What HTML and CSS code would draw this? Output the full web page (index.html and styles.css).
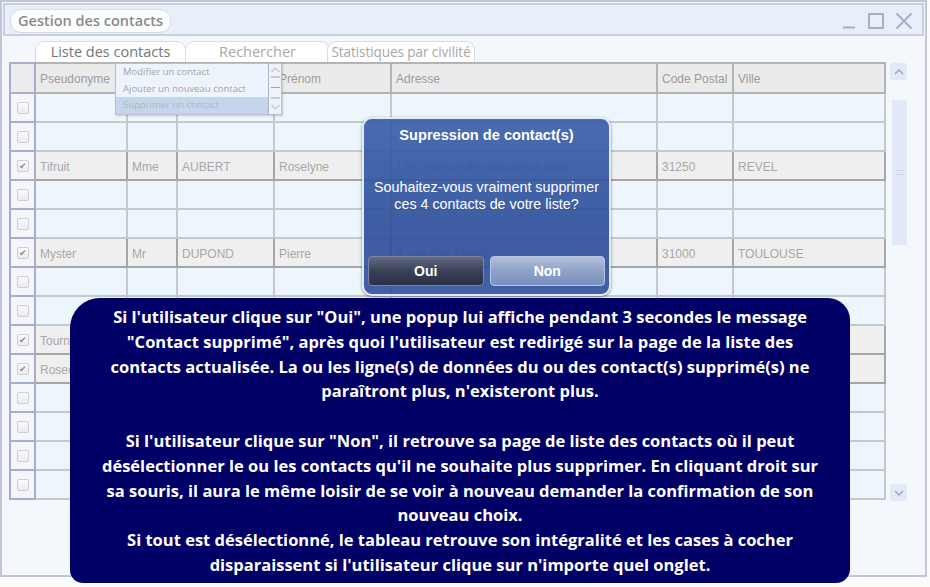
FILE: index.html
```html
<!DOCTYPE html>
<html lang="fr">
<head>
<meta charset="utf-8">
<title>Gestion des contacts</title>
<link rel="stylesheet" href="styles.css">
</head>
<body>
<div class="window">
  <div class="titlebar">
    <span class="title-pill">Gestion des contacts</span>
    <div class="controls">
      <svg class="ctl" width="16" height="18" viewBox="0 0 16 18"><path d="M2 15.5H14" stroke="#a9adc6" stroke-width="2"/></svg>
      <svg class="ctl" width="18" height="18" viewBox="0 0 18 18"><rect x="2" y="2" width="14" height="14" fill="none" stroke="#a9adc6" stroke-width="2"/></svg>
      <svg class="ctl" width="18" height="18" viewBox="0 0 18 18"><path d="M1.5 1.5L16.5 16.5M16.5 1.5L1.5 16.5" stroke="#a9adc6" stroke-width="2"/></svg>
    </div>
  </div>
  <div class="content">
    <div class="tabs">
      <div class="tab tab-active">Liste des contacts</div>
      <div class="tab tab-2">Rechercher</div>
      <div class="tab tab-3">Statistiques par civilité</div>
    </div>
    <div class="grid-area">
      <table class="grid">
        <colgroup>
          <col class="c-chk"><col class="c-pseudo"><col class="c-civ"><col class="c-nom"><col class="c-prenom"><col class="c-adr"><col class="c-cp"><col class="c-ville">
        </colgroup>
        <thead>
          <tr class="head">
            <th class="chk"></th><th>Pseudonyme</th><th></th><th></th><th>Prénom</th><th>Adresse</th><th>Code Postal</th><th>Ville</th>
          </tr>
        </thead>
        <tbody>
          <tr><td class="chk"><span class="box"></span></td><td></td><td></td><td></td><td></td><td></td><td></td><td></td></tr>
          <tr><td class="chk"><span class="box"></span></td><td></td><td></td><td></td><td></td><td></td><td></td><td></td></tr>
          <tr class="sel"><td class="chk"><span class="box checked">✔</span></td><td>Tifruit</td><td>Mme</td><td>AUBERT</td><td>Roselyne</td><td>175, Avenue des Moulins à Vent</td><td>31250</td><td>REVEL</td></tr>
          <tr><td class="chk"><span class="box"></span></td><td></td><td></td><td></td><td></td><td></td><td></td><td></td></tr>
          <tr><td class="chk"><span class="box"></span></td><td></td><td></td><td></td><td></td><td></td><td></td><td></td></tr>
          <tr class="sel"><td class="chk"><span class="box checked">✔</span></td><td>Myster</td><td>Mr</td><td>DUPOND</td><td>Pierre</td><td>2, rue des Tilleuls</td><td>31000</td><td>TOULOUSE</td></tr>
          <tr><td class="chk"><span class="box"></span></td><td></td><td></td><td></td><td></td><td></td><td></td><td></td></tr>
          <tr><td class="chk"><span class="box"></span></td><td></td><td></td><td></td><td></td><td></td><td></td><td></td></tr>
          <tr class="sel"><td class="chk"><span class="box checked">✔</span></td><td class="clip">Tourn</td><td></td><td></td><td></td><td></td><td></td><td></td></tr>
          <tr class="sel"><td class="chk"><span class="box checked">✔</span></td><td class="clip">Rosec</td><td></td><td></td><td></td><td></td><td></td><td></td></tr>
          <tr><td class="chk"><span class="box"></span></td><td></td><td></td><td></td><td></td><td></td><td></td><td></td></tr>
          <tr><td class="chk"><span class="box"></span></td><td></td><td></td><td></td><td></td><td></td><td></td><td></td></tr>
          <tr><td class="chk"><span class="box"></span></td><td></td><td></td><td></td><td></td><td></td><td></td><td></td></tr>
          <tr><td class="chk"><span class="box"></span></td><td></td><td></td><td></td><td></td><td></td><td></td><td></td></tr>
        </tbody>
      </table>
      <div class="vscroll">
        <div class="sbtn"><svg width="10" height="6" viewBox="0 0 10 6"><path d="M1 5L5 1L9 5" fill="none" stroke="#9aa2b8" stroke-width="1.3"/></svg></div>
        <div class="track">
          <div class="thumb"><span class="grip"></span></div>
        </div>
        <div class="sbtn"><svg width="10" height="6" viewBox="0 0 10 6"><path d="M1 1L5 5L9 1" fill="none" stroke="#9aa2b8" stroke-width="1.3"/></svg></div>
      </div>
    </div>
  </div>

  <div class="ctx-menu">
    <ul class="ctx-items">
      <li>Modifier un contact</li>
      <li>Ajouter un nouveau contact</li>
      <li class="ctx-hl">Supprimer un contact</li>
    </ul>
    <div class="ctx-scroll">
      <svg width="11" height="48" viewBox="0 0 11 48">
        <path d="M1.5 7L5.5 3L9.5 7" fill="none" stroke="#9ca4ba" stroke-width="1"/>
        <path d="M1 12H10M1 22.5H10M1 33H10" stroke="#9ca4ba" stroke-width="1"/>
        <path d="M1.5 40L5.5 44L9.5 40" fill="none" stroke="#9ca4ba" stroke-width="1"/>
      </svg>
    </div>
  </div>

  <div class="dialog">
    <div class="dlg-title">Supression de contact(s)</div>
    <div class="dlg-msg">Souhaitez-vous vraiment supprimer<br>ces 4 contacts de votre liste?</div>
    <div class="dlg-buttons">
      <button class="btn btn-yes">Oui</button>
      <button class="btn btn-no">Non</button>
    </div>
  </div>

  <div class="note">
    <p>Si l'utilisateur clique sur "Oui", une popup lui affiche pendant 3 secondes le message<br>"Contact supprimé", après quoi l'utilisateur est redirigé sur la page de la liste des<br>contacts actualisée. La ou les ligne(s) de données du ou des contact(s) supprimé(s) ne<br>paraîtront plus, n'existeront plus.</p>
    <p class="gap">Si l'utilisateur clique sur "Non", il retrouve sa page de liste des contacts où il peut<br>désélectionner le ou les contacts qu'il ne souhaite plus supprimer. En cliquant droit sur<br>sa souris, il aura le même loisir de se voir à nouveau demander la confirmation de son<br>nouveau choix.<br>Si tout est désélectionné, le tableau retrouve son intégralité et les cases à cocher<br>disparaissent si l'utilisateur clique sur n'importe quel onglet.</p>
  </div>
</div>
</body>
</html>
```

FILE: styles.css
```css
* { box-sizing: border-box; }

html, body {
  margin: 0;
  padding: 0;
  background: #fbfbfc;
  width: 930px;
  height: 587px;
  overflow: hidden;
}

.window {
  position: relative;
  width: 927px;
  height: 577px;
  border: 2px solid #c2c5da;
  background: #f4f8fd;
  font-family: "Liberation Sans", Arial, sans-serif;
}

/* Title bar */
.titlebar {
  height: 33px;
  margin: 1px 1px 0 1px;
  border: 2px solid #c9cde2;
  background: #e7eff9;
  display: flex;
  align-items: flex-start;
  justify-content: space-between;
  padding: 4px 9px 0 5px;
}

.title-pill {
  height: 24px;
  padding: 0 7px;
  background: #fdfeff;
  border: 1px solid #d6dbe6;
  border-radius: 11px;
  font-family: "Open Sans", sans-serif;
  font-weight: 600;
  font-size: 14.5px;
  line-height: 22px;
  color: #8a8a8a;
}

.controls {
  display: flex;
  align-items: flex-start;
  gap: 10px;
  padding-top: 3px;
}

.ctl { display: block; }

/* Content */
.content {
  padding: 5px 0 0 7px;
}

.tabs {
  display: flex;
  height: 21px;
  margin-left: 26px;
}

.tab {
  height: 21px;
  background: #ffffff;
  border: 1px solid #d8dbe3;
  border-bottom: none;
  border-radius: 9px 9px 0 0;
  font-family: "Open Sans", sans-serif;
  font-size: 14.5px;
  line-height: 19px;
  color: #a8a8a8;
  text-align: center;
  overflow: hidden;
  white-space: nowrap;
}

.tab-active {
  width: 151px;
  color: #767676;
  z-index: 1;
}

.tab-2 {
  width: 145px;
  margin-left: -1px;
}

.tab-3 {
  width: 148px;
  margin-left: -3px;
  font-size: 13.6px;
  letter-spacing: -0.1px;
}

.grid-area {
  display: flex;
  gap: 4px;
  align-items: flex-start;
}

/* Table */
.grid {
  border-collapse: collapse;
  table-layout: fixed;
  width: 875px;
  font-size: 12px;
  color: #a8a8a8;
  border: 2px solid #b2b2b2;
}

.c-chk { width: 25px; }
.c-pseudo { width: 92px; }
.c-civ { width: 50px; }
.c-nom { width: 97px; }
.c-prenom { width: 117px; }
.c-adr { width: 266px; }
.c-cp { width: 76px; }
.c-ville { width: 152px; }

.grid th,
.grid td {
  border: 2px solid #c6c9cc;
  padding: 2px 0 0 4px;
  text-align: left;
  font-weight: normal;
  white-space: nowrap;
  overflow: hidden;
}

.grid .head {
  height: 30px;
  background: #ebebeb;
}

.grid .head th {
  border-color: #b4b4b4;
  color: #9c9c9c;
}

.grid tbody tr {
  height: 29px;
  background: #eef6fd;
}

.grid tbody tr.sel {
  background: #efefef;
}

.grid tbody tr.sel td {
  border-color: #a6a6a6;
}

.grid .chk,
.grid tbody tr.sel td.chk,
.grid .head th.chk {
  border: 2px solid #a9accf;
  background: #f3f6fb;
  padding: 0;
  text-align: center;
}

.grid .head th.chk {
  background: #ececec;
}

.box {
  display: inline-block;
  width: 12px;
  height: 12px;
  border: 1px solid #cfcfcf;
  border-radius: 2px;
  background: linear-gradient(#fafafa, #ececec);
  vertical-align: middle;
  font-size: 9px;
  line-height: 10px;
  color: #8f8f8f;
  text-align: center;
}

/* Scrollbar */
.vscroll {
  width: 17px;
  height: 438px;
  display: flex;
  flex-direction: column;
  margin-top: 1px;
}

.sbtn {
  height: 17px;
  background: #e3eaf7;
  border-radius: 2px;
  display: flex;
  align-items: center;
  justify-content: center;
}

.track {
  flex: 1;
  padding-top: 20px;
}

.thumb {
  height: 145px;
  margin-left: 2px;
  background: #e2eafa;
  display: flex;
  align-items: center;
  justify-content: center;
}

.grip {
  width: 8px;
  height: 5px;
  border-top: 1px solid #cdd6e8;
  border-bottom: 1px solid #cdd6e8;
}

/* Context menu (overlay) */
.ctx-menu {
  position: absolute;
  left: 113px;
  top: 61px;
  width: 167px;
  height: 52px;
  background: #eef4fb;
  border: 1px solid #b9bfcf;
  box-shadow: 1px 1px 2px rgba(0,0,0,0.18);
  display: flex;
}

.ctx-items {
  list-style: none;
  margin: 0;
  padding: 0;
  flex: 1;
  font-family: "Open Sans", sans-serif;
  font-size: 9.5px;
  color: #a5a5a5;
}

.ctx-items li {
  height: 16.5px;
  line-height: 16px;
  padding-left: 7px;
}

.ctx-items .ctx-hl {
  background: #c5d6ec;
  color: #acb6c6;
}

.ctx-scroll {
  width: 13px;
  border-left: 1px solid #aab2c6;
  background: #eef3fa;
  display: flex;
  justify-content: center;
  align-items: center;
}

/* Dialog (overlay) */
.dialog {
  position: absolute;
  left: 360px;
  top: 115px;
  width: 249px;
  height: 179px;
  border: 2px solid rgba(240, 244, 252, 0.92);
  border-radius: 10px;
  background: linear-gradient(rgba(60, 96, 170, 0.93), rgba(42, 76, 152, 0.9) 60%, rgba(46, 80, 156, 0.9));
  box-shadow: 0 1px 3px rgba(0,0,0,0.45);
  color: #ffffff;
  display: flex;
  flex-direction: column;
  align-items: center;
  padding: 8px 4px 0;
}

.dlg-title {
  font-weight: bold;
  font-size: 14.6px;
  line-height: 17px;
}

.dlg-msg {
  margin-top: 35px;
  font-size: 14.3px;
  line-height: 17px;
  text-align: center;
}

.dlg-buttons {
  margin-top: 43px;
  display: flex;
  gap: 6px;
  width: 100%;
}

.btn {
  flex: 1;
  height: 30px;
  border-radius: 4px;
  font-family: "Liberation Sans", Arial, sans-serif;
  font-weight: bold;
  font-size: 14px;
  color: #ffffff;
  padding: 0;
}

.btn-yes {
  background: linear-gradient(#636a82, #3a4058 50%, #2c3148);
  border: 1px solid #7d86a2;
}

.btn-no {
  background: linear-gradient(#b3c0da, #8ea1c8 50%, #7a90c0);
  border: 1px solid #b9c6df;
}

/* Explanatory note (overlay) */
.note {
  position: absolute;
  left: 68px;
  top: 296px;
  width: 780px;
  height: 285px;
  background: #000066;
  border-radius: 30px 22px 14px 13px;
  color: #ffffff;
  font-family: "Open Sans", sans-serif;
  font-weight: bold;
  font-size: 16.5px;
  line-height: 24.8px;
  text-align: center;
  padding-top: 7px;
  white-space: nowrap;
}

.note p {
  margin: 0;
}

.note .gap {
  margin-top: 24.8px;
}
```
